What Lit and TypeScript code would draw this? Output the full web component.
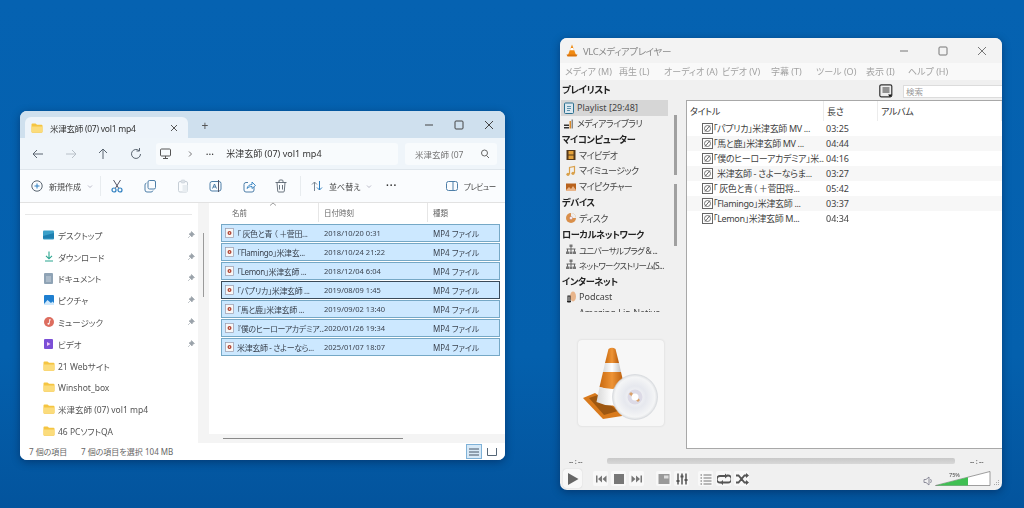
import { LitElement, html, css, svg } from "lit";
import { customElement } from "lit/decorators.js";

const ico = (w: number, h: number, c: unknown, cls = "") =>
  html`<svg class="ico ${cls}" width=${w} height=${h} viewBox="0 0 ${w} ${h}" fill="none">${c}</svg>`;

const folder = ico(12, 12, svg`<path d="M.5 2.500a1 1 0 0 1 1-1h3l1.500 1.300h4.500a1 1 0 0 1 1 1v6a1 1 0 0 1-1 1h-9a1 1 0 0 1-1-1z" fill="#f5c542"/><path d="M.5 4.500h11v5a1 1 0 0 1-1 1h-9a1 1 0 0 1-1-1z" fill="#fbdc7c"/>`);
const stroke = "#5a6570";
const arrow = (d: string, col = stroke) => ico(14, 14, svg`<path d=${d} stroke=${col} stroke-width="1"/>`);
const chev = ico(6, 5, svg`<path d="M1 1.500l2 2 2-2" stroke="#aab" stroke-width=".8"/>`);

const cmdIcons = {
  cut: ico(14, 14, svg`<path d="M3.500 1l5 8M10.500 1l-5 8" stroke="#556" stroke-width="1"/><circle cx="4" cy="11" r="2" stroke="#2e7fc0" stroke-width="1.200"/><circle cx="10" cy="11" r="2" stroke="#2e7fc0" stroke-width="1.200"/>`),
  copy: ico(14, 14, svg`<rect x="5" y="1.500" width="7.500" height="8.500" rx="1.500" stroke="#4e7fa8"/><path d="M3.500 4A2 2 0 0 0 2 6v5a2 2 0 0 0 2 2h4a2 2 0 0 0 2-1.500" stroke="#4e7fa8"/>`),
  paste: ico(14, 14, svg`<rect x="2.500" y="2.500" width="9" height="10.500" rx="1.500" stroke="#c6ced6"/><rect x="5" y="1" width="4" height="3" rx="1" fill="#dde3e8" stroke="#c6ced6" stroke-width=".6"/><rect x="6.500" y="6" width="5" height="7" fill="#e8edf1"/>`),
  rename: ico(14, 14, svg`<rect x="1" y="2.500" width="11" height="9.500" rx="2" stroke="#4e7fa8"/><path d="M3.500 9.500L5.500 5l2 4.500M4.200 8h2.600" stroke="#3a6f9c" stroke-width=".9"/><path d="M9.500 1v12" stroke="#556" stroke-width="1"/>`),
  share: ico(14, 14, svg`<path d="M12 8v3a2 2 0 0 1-2 2H4a2 2 0 0 1-2-2V5.500a2 2 0 0 1 2-2h2" stroke="#4e7fa8"/><path d="M5 9.500C5.500 7 7.500 5.500 10 5.500V3l3.500 3.500L10 9.500V7.500C8 7.500 6.500 8 5 9.500z" stroke="#2e7fc0" stroke-width=".9"/>`),
  trash: ico(14, 14, svg`<path d="M1.500 3.500h11M5 3.500V2a1 1 0 0 1 1-1h2a1 1 0 0 1 1 1v1.500M3 3.500l.7 8.500a1 1 0 0 0 1 1h4.600a1 1 0 0 0 1-1L11 3.500M5.500 6v4.500M8.500 6v4.500" stroke="#5a6570" stroke-width=".9"/>`),
  sort: ico(12, 12, svg`<path d="M3.500 11V2M1 4.500l2.500-2.500 2.500 2.500" stroke="#7a8794"/><path d="M8.500 1v9M6 7.500l2.500 2.500 2.500-2.500" stroke="#2e7fc0"/>`),
  preview: ico(12, 10, svg`<rect x=".5" y=".5" width="11" height="9" rx="2" stroke="#4e7fa8"/><path d="M7 .5v9" stroke="#4e7fa8"/>`),
};

const navIcons = {
  desk: ico(11, 10, svg`<rect width="11" height="9" y=".5" rx="1" fill="#3aa0c9"/><path d="M0 6l11-3v5.500H0z" fill="#1e7fb0"/>`),
  down: ico(10, 11, svg`<path d="M5 .5v7M2 4.800l3 3 3-3" stroke="#2aa58f" stroke-width="1.100"/><path d="M1 10h8" stroke="#2aa58f" stroke-width="1.200"/>`),
  doc: ico(9, 11, svg`<rect width="9" height="11" rx="1" fill="#8fa3b5"/><path d="M2 4h5M2 6h5M2 8h5" stroke="#dfe7ee" stroke-width=".7"/>`),
  pic: ico(10, 10, svg`<rect width="10" height="10" rx="1" fill="#1f7fd0"/><path d="M0 9l3.500-4L7 8l1.500-1.500L10 8v2H0z" fill="#cfe8fb"/>`),
  music: ico(10, 10, svg`<circle cx="5" cy="5" r="5" fill="#dd6d5f"/><path d="M5.500 2.500v4M5.500 2.500l1.500.6" stroke="#fff" stroke-width=".8"/><circle cx="4.500" cy="6.800" r="1" fill="#fff"/>`),
  video: ico(9, 10, svg`<rect width="9" height="10" rx="1" fill="#7b4fd6"/><path d="M3 3l3.500 2L3 7z" fill="#f1c9f5"/>`),
  pin: ico(8, 8, svg`<path d="M4.500.5L7.500 3.500 6 4 5 6 2 3l2-1zM3.200 4.800L1 7" fill="#9aa2aa" stroke="#9aa2aa" stroke-width=".6"/>`),
};

const fileIcon = ico(9, 10, svg`<rect x=".5" y=".5" width="8" height="9" fill="#f7f7f7" stroke="#99a" stroke-width=".7"/><circle cx="4.500" cy="5" r="2" fill="#b0402f"/><circle cx="4.500" cy="5" r=".7" fill="#fff"/>`);

const coneSmall = ico(12, 13, svg`<path d="M6 0.500l4 10.500H2z" fill="#f08a12"/><path d="M4.700 4h2.600l.8 2.200H3.900z" fill="#fff"/><path d="M.5 10.500h11l-1 2h-9z" fill="#d9730a"/>`);

const playlistDoc = ico(12, 12, svg`<rect x="1.500" y="1" width="9" height="10.500" rx="1" fill="#dbe8f0" stroke="#2a6f8f"/><path d="M4 4.500h4M4 6.500h4M4 8.500h3" stroke="#2a6f8f" stroke-width=".7"/>`);
const sideIcons: Record<string, unknown> = {
  pl: playlistDoc,
  lib: ico(12, 12, svg`<rect x="1" y="6.500" width="5" height="1.500" fill="#333"/><rect x="1" y="9" width="5" height="1.500" fill="#333"/><rect x="6.500" y="3" width="1.500" height="7.500" fill="#d98a2b"/><rect x="8.500" y="1.500" width="1.500" height="9" fill="#888"/>`),
  vid: ico(12, 12, svg`<rect x="1.500" y="1" width="9" height="10" fill="#53381c"/><rect x="3.500" y="2" width="5" height="3.500" fill="#e6a33b"/><rect x="3.500" y="6.500" width="5" height="3.500" fill="#e6a33b"/>`),
  mus: ico(12, 12, svg`<path d="M4.500 9V2.500l5-1V8" stroke="#d9a04a" stroke-width="1.200"/><circle cx="3" cy="9.300" r="1.600" fill="#d9a04a"/><circle cx="8" cy="8.300" r="1.600" fill="#d9a04a"/>`),
  pic: ico(12, 12, svg`<rect x="1" y="2.500" width="10" height="7.500" fill="#b8621d"/><path d="M1 9l3-3 2 2 2-3 3 4v1H1z" fill="#e9b58a"/>`),
  disc: ico(12, 12, svg`<circle cx="6" cy="6" r="5" fill="#d98f4a"/><path d="M6 1a5 5 0 0 1 5 5H6z" fill="#eee"/><circle cx="6" cy="6" r="1.500" fill="#fff" stroke="#b77" stroke-width=".5"/>`),
  net: ico(12, 12, svg`<path d="M6 1.500v6M1.500 5h9M2.500 5v3M9.500 5v3" stroke="#666" stroke-width="1"/><rect x="4.500" y=".5" width="3" height="2.500" fill="#777"/><rect x="1" y="7.500" width="3" height="2.500" fill="#777"/><rect x="8" y="7.500" width="3" height="2.500" fill="#777"/><rect x="4.500" y="7.500" width="3" height="2.500" fill="#777"/>`),
  pod: ico(12, 12, svg`<ellipse cx="8" cy="5.500" rx="3" ry="5" fill="#e8b58b"/><path d="M3 5h2v6H3zM2 10.500h4" stroke="#222" stroke-width="1.100"/>`),
  ama: ico(12, 12, svg`<path d="M1 8h10" stroke="#c98a3a" stroke-width="2"/>`),
};

const rowIcon = ico(11, 11, svg`<rect x=".5" y=".5" width="10" height="10" fill="#fff" stroke="#666"/><circle cx="5.500" cy="5.500" r="3" stroke="#666" stroke-width=".9"/><path d="M3 8.500L8 2.500" stroke="#555" stroke-width=".9"/>`);

const art = ico(86, 86, svg`
  <defs>
    <radialGradient id="d" cx=".5" cy=".5" r=".55"><stop offset="0" stop-color="#fbfbfb"/><stop offset=".45" stop-color="#e6e8ee"/><stop offset=".8" stop-color="#f4f5f6"/><stop offset="1" stop-color="#cdd0d4"/></radialGradient>
    <linearGradient id="c" x1="0" x2="1"><stop offset="0" stop-color="#c96a10"/><stop offset=".5" stop-color="#ee9436"/><stop offset="1" stop-color="#b5590a"/></linearGradient>
    <linearGradient id="w" x1="0" x2="1"><stop offset="0" stop-color="#d8d8d8"/><stop offset=".5" stop-color="#fff"/><stop offset="1" stop-color="#c4c4c4"/></linearGradient>
  </defs>
  <path d="M5 58L17 53 46 73 44 76 25 79z" fill="#d97a1c"/><path d="M11 58L20 55 40 71 26 75z" fill="#8f4f0e" opacity=".8"/>
  <path d="M30.500 9q3.500-2.500 7 0L41 23H27z" fill="url(#c)"/>
  <path d="M27 23h14l2 9H25z" fill="url(#w)"/>
  <path d="M25 32h18l3.500 15q-12 4-25 0z" fill="url(#c)"/>
  <path d="M21.500 47q13 4 25 0l3 15q-16 7-31 0z" fill="url(#w)"/>
  <circle cx="57" cy="57" r="22.500" fill="url(#d)" stroke="#cfd2d6" stroke-width=".6"/>
  <circle cx="57" cy="57" r="7.500" fill="#dcdae6"/><path d="M52 53l9 8" stroke="#d9a06a" stroke-width="3"/><circle cx="57" cy="57" r="3.500" fill="#fff"/>
`);

const ctrl = {
  prev: ico(14, 14, svg`<path d="M2 3.500h1.500v7H2zM8 3.500v7L4 7zM12.500 3.500v7L8.500 7z" fill="#777"/>`),
  stop: ico(14, 14, svg`<rect x="2" y="2" width="10" height="10" fill="#777"/>`),
  next: ico(14, 14, svg`<path d="M10.500 3.500H12v7h-1.500zM1.500 3.500v7L5.500 7zM6 3.500v7L10 7z" fill="#777"/>`),
  frame: ico(14, 14, svg`<rect x="1.500" y="2" width="11" height="10" fill="#999"/><rect x="7" y="3.500" width="4.500" height="3" fill="#ddd"/>`),
  ext: ico(14, 14, svg`<path d="M3 1.500v11M7 1.500v11M11 1.500v11" stroke="#555" stroke-width="1.500"/><path d="M1.500 9h3M5.500 4.500h3M9.500 8h3" stroke="#555" stroke-width="2"/>`),
  list: ico(14, 14, svg`<path d="M4.500 3h8M4.500 6h8M4.500 9h8M4.500 12h8" stroke="#777" stroke-width="1.200"/><path d="M1.500 3h1.500M1.500 6h1.500M1.500 9h1.500M1.500 12h1.500" stroke="#666" stroke-width="1.200"/>`),
  loop: ico(14, 14, svg`<path d="M4 10.500H3a2.500 2.500 0 0 1 0-6.500h6M10 3.500h1a2.500 2.500 0 0 1 0 7H5" stroke="#555" stroke-width="1.800"/><path d="M8 1.500L11 4 8 6.500zM6 8l-3 2.500L6 13z" fill="#555"/>`),
  shuf: ico(14, 14, svg`<path d="M1 3.500h2.500l6 7H12M1 10.500h2.500l6-7H12" stroke="#555" stroke-width="1.800"/><path d="M11 1l3 2.500L11 6zM11 8l3 2.500L11 13z" fill="#555"/>`),
};

const files = [
  ["「 灰色と青 （ ＋菅田...", "2018/10/20 0:31"],
  ["「Flamingo」米津玄...", "2018/10/24 21:22"],
  ["「Lemon」米津玄師 ...", "2018/12/04 6:04"],
  ["「パプリカ」米津玄師 ...", "2019/08/09 1:45"],
  ["「馬と鹿」米津玄師 ...", "2019/09/02 13:40"],
  ["『僕のヒーローアカデミア...", "2020/01/26 19:34"],
  ["米津玄師 - さよーなら...", "2025/01/07 18:07"],
];
const navItems: [unknown, string, boolean][] = [
  [navIcons.desk, "デスクトップ", true], [navIcons.down, "ダウンロード", true],
  [navIcons.doc, "ドキュメント", true], [navIcons.pic, "ピクチャ", true],
  [navIcons.music, "ミュージック", true], [navIcons.video, "ビデオ", true],
  [folder, "21 Webサイト", false], [folder, "Winshot_box", false],
  [folder, "米津玄師 (07) vol1 mp4", false], [folder, "46 PCソフトQA", false],
];
const side: [string, string | null, boolean?][] = [
  ["Playlist [29:48]", "pl", true], ["メディアライブラリ", "lib"], ["マイコンピューター", null],
  ["マイビデオ", "vid"], ["マイミュージック", "mus"], ["マイピクチャー", "pic"], ["デバイス", null],
  ["ディスク", "disc"], ["ローカルネットワーク", null], ["ユニバーサルプラグ & ...", "net"],
  ["ネットワークストリーム(S...", "net"], ["インターネット", null], ["Podcast", "pod"], ["Amazing Lin Native", "ama"],
];
const tracks = [
  ["「パプリカ」米津玄師 MV ...", "03:25"], ["「馬と鹿」米津玄師 MV ...", "04:44"],
  ["「僕のヒーローアカデミア」米...", "04:16"], ["\u00a0\u00a0米津玄師 - さよーならま...", "03:27"],
  ["「 灰色と青（ ＋菅田将...", "05:42"], ["「Flamingo」米津玄師 ...", "03:37"], ["「Lemon」米津玄師  M...", "04:34"],
];

@customElement("app-root")
export class AppRoot extends LitElement {
  static styles = css`
    :host { display: block; position: relative; width: 1024px; height: 508px; overflow: hidden;
      background: linear-gradient(180deg, #0562b1 0%, #0460ad 70%, #03549d 100%);
      font-family: "Noto Sans", "Noto Sans CJK JP", sans-serif; font-size: 8.5px; color: #4a4a4a;
      font-feature-settings: "palt"; }
    .ico { display: block; flex: none; }
    .win { position: absolute; display: flex; flex-direction: column; overflow: hidden; border-radius: 7px;
      box-shadow: 0 2px 8px rgba(0,0,30,.35); filter: blur(.35px); }
    .explorer { left: 20px; top: 111px; width: 485px; height: 349px; background: #fff; }
    .tabs { height: 27px; flex: none; background: #cfe0ee; display: flex; align-items: flex-end; padding-left: 5px; }
    .tab { width: 163px; height: 21px; box-sizing: border-box; background: #eef4fa; border-radius: 6px 6px 0 0;
      display: flex; align-items: center; padding: 0 10px 0 6px; gap: 7px; font-size: 8.5px; letter-spacing: -.25px; color: #333; }
    .tab span { flex: 1; }
    .plus { margin: 0 0 5px 10px; color: #555; font-size: 12px; line-height: 14px; width: 14px; text-align: center; }
    .wc { margin-left: auto; display: grid; grid-template-columns: repeat(3, 30px); height: 27px; align-self: flex-start;
      justify-items: center; align-items: center; padding-right: 1px; }
    .nav { height: 32px; flex: none; background: #eff5fa; display: flex; align-items: center; padding-left: 11px;
      box-sizing: border-box; border-bottom: 1px solid #dfe6ec; }
    .navbtns { display: grid; grid-template-columns: repeat(4, 32.7px); width: 125px; flex: none; }
    .addr { width: 242px; height: 22px; background: #f8fbfd; border-radius: 3px; display: flex; align-items: center;
      padding-left: 3px; box-sizing: border-box; font-size: 9px; color: #333; flex: none; }
    .addr svg:first-of-type { margin-right: 14px; }
    .addr .dots { margin: 0 12px 0 12px; font-weight: 700; font-size: 8px; letter-spacing: .5px; }
    .srch { margin-left: 7px; width: 92px; height: 22px; background: #f8fbfd; border-radius: 3px; display: flex;
      align-items: center; justify-content: space-between; padding: 0 7px 0 10px; box-sizing: border-box; color: #777; font-size: 8.5px; }
    .cmd { height: 33px; flex: none; background: #fafcfe; border-bottom: 1px solid #e2e2e2; box-sizing: border-box;
      display: flex; align-items: center; padding-left: 11px; font-size: 8px; color: #444; }
    .new { display: flex; align-items: center; gap: 6px; width: 69px; flex: none; }
    .vsep { width: 1px; height: 20px; background: #e8ecef; flex: none; }
    .cmdicons { display: grid; grid-template-columns: repeat(6, 32.8px); justify-items: center; width: 199px; flex: none; }
    .sort { display: flex; align-items: center; gap: 6px; margin-left: 10px; width: 75px; flex: none; }
    .more { font-weight: 700; font-size: 10px; letter-spacing: 1px; width: 60px; flex: none; color: #333; line-height: 10px; margin-top: -3px; }
    .prev { display: flex; align-items: center; gap: 6px; letter-spacing: -.5px; font-size: 7.5px; white-space: nowrap; }
    .body { flex: 1; min-height: 0; display: flex; }
    .tree { width: 178px; flex: none; padding: 11px 6px 0 5px; box-sizing: border-box; background: #fff; }
    .tree hr { border: 0; border-top: 1px solid #e8e8e8; margin: 0 0 9px; }
    .ti { height: 21.8px; display: flex; align-items: center; padding-left: 18px; gap: 4px; color: #555; font-size: 8.5px; }
    .ti .lab { flex: 1; }
    .ti .ii { width: 11px; display: flex; justify-content: center; }
    .ti > svg { margin-right: -3px; }
    .gut { width: 11px; flex: none; background: #f4f4f4; padding-top: 30px; box-sizing: border-box; display: flex; justify-content: center; }
    .gut i { display: block; width: 1.500px; height: 64px; background: #9a9a9a; }
    .list { flex: 1; min-width: 0; display: flex; flex-direction: column; }
    .lhead { height: 19px; flex: none; display: grid; grid-template-columns: 110px 109px 1fr; padding-left: 0; color: #666; font-size: 7.5px; align-items: center; }
    .lhead div { height: 100%; display: flex; align-items: center; padding-left: 5px; border-right: 1px solid #e6e6e6; box-sizing: border-box; }
    .lhead div:first-child { padding-left: 23px; position: relative; }
    .lhead div:last-child { border: 0; }
    .caret { position: absolute; left: 60px; top: -1px; }
    .rows { flex: 1; padding: 2px 5px 0 12px; display: flex; flex-direction: column; gap: 1px; }
    .fr { height: 18px; box-sizing: border-box; background: #cce8ff; border: 1px solid #75a8c6; display: grid;
      grid-template-columns: 13px 87px 109px 1fr; align-items: center; padding-left: 2px; color: #3c4450; font-size: 8px; white-space: nowrap; }
    .fr span { overflow: hidden; }
    .fr .nm { letter-spacing: -.35px; }
    .fr.focus { border-color: #3a4a58; }
    .fr .ico { margin-left: 1px; }
    .fr .d { font-size: 7.5px; }
    .hbar { height: 9px; flex: none; background: #f4f4f4; display: flex; align-items: center; padding-left: 14px; }
    .hbar i { display: block; width: 180px; height: 1.500px; background: #8a8a8a; }
    .status { height: 17px; flex: none; background: #fff; display: flex; align-items: center; padding-left: 9px; color: #666; font-size: 8px; }
    .status span:nth-child(1) { width: 52px; } .status span:nth-child(2) { width: 64px; }
    .views { margin-left: auto; display: flex; gap: 2px; padding-right: 5px; }
    .vw { width: 16px; height: 15px; display: flex; align-items: center; justify-content: center; box-sizing: border-box; }
    .vw.on { background: #d7e9f7; border: 1px solid #7fb2d8; }

    .vlc { left: 560px; top: 38px; width: 442px; height: 452px; background: #f0f0f0; }
    .vt { height: 25px; flex: none; display: flex; align-items: center; padding-left: 6px; gap: 5px; background: #f3f3f3; color: #8a8a8a; font-size: 9.5px; letter-spacing: -.4px; }
    .vt .wc2 { margin-left: auto; display: grid; grid-template-columns: repeat(3, 39px); justify-items: center; padding-right: 1px; }
    .menu { height: 17px; flex: none; background: #f9f9f9; display: grid; grid-template-columns: 54px 45px 58px 49px 45px 50px 42px auto;
      align-items: center; padding-left: 5px; color: #a2a2a2; font-size: 9px; white-space: nowrap; }
    .pane { flex: 1; min-height: 0; display: grid; grid-template-columns: 126px 1fr; grid-template-rows: 20px 1fr; }
    .ph { grid-column: 1; padding: 2px 0 0 2px; font-weight: 700; color: #222; font-size: 9.5px; letter-spacing: -.5px; line-height: 16px; white-space: nowrap; }
    .tool { display: flex; justify-content: flex-end; align-items: flex-start; padding-top: 5px; gap: 10px; }
    .tbtn { width: 14px; height: 14px; margin-top: -1px; }
    .box { width: 99px; height: 13px; background: #fff; border: 1px solid #dcdcdc; border-right: 0; box-sizing: border-box; color: #999; font-size: 8.5px;
      padding-left: 2px; line-height: 12px; }
    .lcol { display: flex; flex-direction: column; min-height: 0; }
    .sideWrap { display: flex; height: 212px; overflow: hidden; flex: none; padding-left: 1px; }
    .sl { width: 107px; flex: none; }
    .si { height: 15.75px; display: flex; align-items: center; gap: 2px; padding-left: 4px; color: #444; font-size: 9px; letter-spacing: -.5px; white-space: nowrap; overflow: hidden; }
    .si.lat { letter-spacing: 0; }
    .si.tight { font-size: 8.5px; letter-spacing: -.7px; }
    .si.sec { padding-left: 1px; font-weight: 700; color: #222; font-size: 9.2px; letter-spacing: -.4px; }
    .si.sel { background: #d6d6d6; }
    .si.top { padding-left: 2px; }
    .sb { margin-left: 6px; width: 3px; padding-top: 15px; display: flex; flex-direction: column; gap: 9px; }
    .sb i { display: block; width: 3px; background: #a0a0a0; }
    .sb i:first-child { height: 60px; } .sb i:last-child { height: 62px; }
    .artcard { margin: 28px 0 0 18px; width: 86px; height: 86px; background: #f7f7f7; border-radius: 4px; border: 0; box-shadow: 0 0 2px #ccc; }
    .tbl { background: #fff; border: 1px solid #a8a8a8; border-right: 0; margin-bottom: 4px; min-height: 0; margin-left: 0; }
    .th { height: 20px; display: grid; grid-template-columns: 137px 54px 1fr; color: #333; font-size: 9px; align-items: center; letter-spacing: -.3px; }
    .th div { height: 100%; display: flex; align-items: center; padding-left: 3px; border-right: 1px solid #ececec; box-sizing: border-box; }
    .tr { height: 15px; display: grid; grid-template-columns: 137px 54px; align-items: center; color: #3f3f3f; font-size: 9px; white-space: nowrap; }
    .tr:nth-child(even) { background: #f7f7f7; }
    .tr .n { display: flex; align-items: center; padding-left: 15px; gap: 0; overflow: hidden; letter-spacing: -.35px; }
    .tr .l { padding-left: 2px; }
    .seek { height: 16px; flex: none; display: flex; align-items: center; padding: 0 9px; gap: 0; color: #777; font-size: 7px; letter-spacing: -.2px; }
    .seek .t { width: 38px; flex: none; font-weight: 700; line-height: 7px; }
    .seek .bar { width: 348px; flex: none; height: 6px; border-radius: 2px; background: linear-gradient(#c8c8c8, #d8d8d8); }
    .seek .t2 { margin-left: 15px; width: 25px; }
    .ctrls { height: 21px; flex: none; display: flex; align-items: center; padding-left: 3px; padding-bottom: 2px; box-sizing: border-box; }
    .play { width: 19px; height: 19px; background: #f8f8f8; border-radius: 3px; display: flex; align-items: center; justify-content: center; margin-right: 11px; box-shadow: 0 0 1px #bbb; }
    .cb { width: 15px; height: 15px; background: #f8f8f8; border-radius: 2px; display: flex; align-items: center; justify-content: center; margin-right: 3px; }
    .gap1 { width: 9px; } .gap2 { width: 6px; }
    .vol { margin-left: auto; display: flex; align-items: flex-end; gap: 2px; padding-right: 2px; position: relative; }
    .pct { position: absolute; left: 26px; top: 0; font-size: 5.500px; color: #444; }
  `;

  render() {
    const wcE = (c = "#444") => [
      ico(10, 10, svg`<path d="M1 5h8" stroke=${c}/>`),
      ico(10, 10, svg`<rect x="1" y="1" width="8" height="8" rx="1" stroke=${c}/>`),
      ico(10, 10, svg`<path d="M1 1l8 8M9 1l-8 8" stroke=${c}/>`),
    ];
    return html`
      <section class="win explorer">
        <div class="tabs">
          <div class="tab">${folder}<span>米津玄師 (07) vol1 mp4</span>${ico(8, 8, svg`<path d="M1 1l6 6M7 1l-6 6" stroke="#555"/>`)}</div>
          <div class="plus">+</div>
          <div class="wc">${wcE()}</div>
        </div>
        <div class="nav">
          <div class="navbtns">
            ${arrow("M12 7H2M6 3L2 7l4 4")}${arrow("M2 7h10M8 3l4 4-4 4", "#b8c0c8")}${arrow("M7 12V2M3 6l4-4 4 4")}
            ${arrow("M11.500 7a4.500 4.500 0 1 1-1.500-3.400M10.500 1v3h-3")}
          </div>
          <div class="addr">
            ${ico(13, 13, svg`<rect x="1.500" y="2" width="10" height="7" rx="1" stroke="#555"/><path d="M4 11.500h5M6.500 9v2.500" stroke="#555"/>`)}
            ${ico(8, 8, svg`<path d="M3 1.500l2.500 2.500L3 6.500" stroke="#555" stroke-width=".8"/>`)}
            <span class="dots">···</span><span>米津玄師 (07) vol1 mp4</span>
          </div>
          <div class="srch"><span>米津玄師 (07</span>${ico(10, 10, svg`<circle cx="4.500" cy="4" r="3" stroke="#666"/><path d="M6.500 6.500L9 9" stroke="#666"/>`)}</div>
        </div>
        <div class="cmd">
          <div class="new">${ico(12, 12, svg`<circle cx="6" cy="6" r="5.200" stroke="#5a6570"/><path d="M6 3.500v5M3.500 6h5" stroke="#2e7fc0"/>`)}<span>新規作成</span>${chev}</div>
          <div class="vsep"></div>
          <div class="cmdicons">${cmdIcons.cut}${cmdIcons.copy}${cmdIcons.paste}${cmdIcons.rename}${cmdIcons.share}${cmdIcons.trash}</div>
          <div class="vsep"></div>
          <div class="sort">${cmdIcons.sort}<span>並べ替え</span>${chev}</div>
          <div class="more">···</div>
          <div class="prev">${cmdIcons.preview}<span>プレビュー</span></div>
        </div>
        <div class="body">
          <div class="tree">
            <hr />
            ${navItems.map(([i, t, p]) => html`<div class="ti"><span class="ii">${i}</span><span class="lab">${t}</span>${p ? navIcons.pin : ""}</div>`)}
          </div>
          <div class="gut"><i></i></div>
          <div class="list">
            <div class="lhead">
              <div>名前<span class="caret">${ico(8, 4, svg`<path d="M1 3.500L4 1l3 2.500" stroke="#888" stroke-width=".8"/>`)}</span></div>
              <div>日付時刻</div><div>種類</div>
            </div>
            <div class="rows">
              ${files.map(([n, d], i) => html`<div class="fr ${i === 3 ? "focus" : ""}">${fileIcon}<span class="nm">${n}</span><span class="d">${d}</span><span>MP4 ファイル</span></div>`)}
            </div>
            <div class="hbar"><i></i></div>
          </div>
        </div>
        <div class="status">
          <span>7 個の項目</span><span>7 個の項目を選択</span><span>104 MB</span>
          <div class="views">
            <div class="vw on">${ico(10, 8, svg`<path d="M0 1h10M0 4h10M0 7h10" stroke="#456"/>`)}</div>
            <div class="vw">${ico(10, 8, svg`<path d="M.5 0v7.500h9V0" stroke="#567"/>`)}</div>
          </div>
        </div>
      </section>

      <section class="win vlc">
        <div class="vt">${coneSmall}<span>VLCメディアプレイヤー</span>
          <div class="wc2">${wcE("#777")}</div>
        </div>
        <div class="menu">
          <span>メディア (M)</span><span>再生 (L)</span><span>オーディオ (A)</span><span>ビデオ (V)</span>
          <span>字幕 (T)</span><span>ツール (O)</span><span>表示 (I)</span><span>ヘルプ (H)</span>
        </div>
        <div class="pane">
          <div class="ph">プレイリスト</div>
          <div class="tool">
            <span class="tbtn">${ico(14, 14, svg`<rect x=".8" y=".8" width="12" height="12" rx="1.500" fill="#eee" stroke="#333" stroke-width="1.200"/><path d="M3.500 4h7M3.500 6h7M3.500 8h7" stroke="#333"/><path d="M9 10.500h4l-2 2.500z" fill="#111"/>`)}</span>
            <div class="box">検索</div>
          </div>
          <div class="lcol">
            <div class="sideWrap">
              <div class="sl">
                ${side.map(([t, ic, sel]) => ic
                  ? html`<div class="si ${sel ? "sel top" : ""} ${ic === "lib" ? "top" : ""} ${/^[A-Z]/.test(t) ? "lat" : ""} ${t.length > 14 && !/^[A-Z]/.test(t) ? "tight" : ""}">${sideIcons[ic]}<span>${t}</span></div>`
                  : html`<div class="si sec">${t}</div>`)}
              </div>
              <div class="sb"><i></i><i></i></div>
            </div>
            <div class="artcard">${art}</div>
          </div>
          <div class="tbl">
            <div class="th"><div>タイトル</div><div>長さ</div><div>アルバム</div></div>
            <div>
              ${tracks.map(([n, l]) => html`<div class="tr"><span class="n">${rowIcon}<span>${n}</span></span><span class="l">${l}</span></div>`)}
            </div>
          </div>
        </div>
        <div class="seek"><span class="t">-- : --</span><div class="bar"></div><span class="t t2">-- : --</span></div>
        <div class="ctrls">
          <div class="play">${ico(14, 14, svg`<path d="M2 1v12l10.500-6z" fill="#666"/>`)}</div>
          <div class="cb">${ctrl.prev}</div><div class="cb">${ctrl.stop}</div><div class="cb">${ctrl.next}</div>
          <div class="gap1"></div>
          <div class="cb">${ctrl.frame}</div><div class="cb">${ctrl.ext}</div>
          <div class="gap2"></div>
          <div class="cb">${ctrl.list}</div><div class="cb">${ctrl.loop}</div><div class="cb">${ctrl.shuf}</div>
          <div class="vol">
            ${ico(10, 10, svg`<path d="M1 3.500h2L6 1v8L3 6.500H1z" stroke="#778" stroke-width=".8"/><path d="M7.500 3a3 3 0 0 1 0 4" stroke="#778" stroke-width=".8"/>`)}
            <span class="pct">75%</span>
            ${ico(56, 15, svg`<path d="M.5 14.500L55 .5v14z" fill="#fff" stroke="#777" stroke-width=".7"/><path d="M1 14.500L33 6.300v8.200z" fill="#3fbf52"/>`)}
            ${ico(7, 7, svg`<path d="M5.500 1v1M3.500 3v1M5.500 3v1M1.500 5v1M3.500 5v1M5.500 5v1" stroke="#aaa"/>`)}
          </div>
        </div>
      </section>
    `;
  }
}
